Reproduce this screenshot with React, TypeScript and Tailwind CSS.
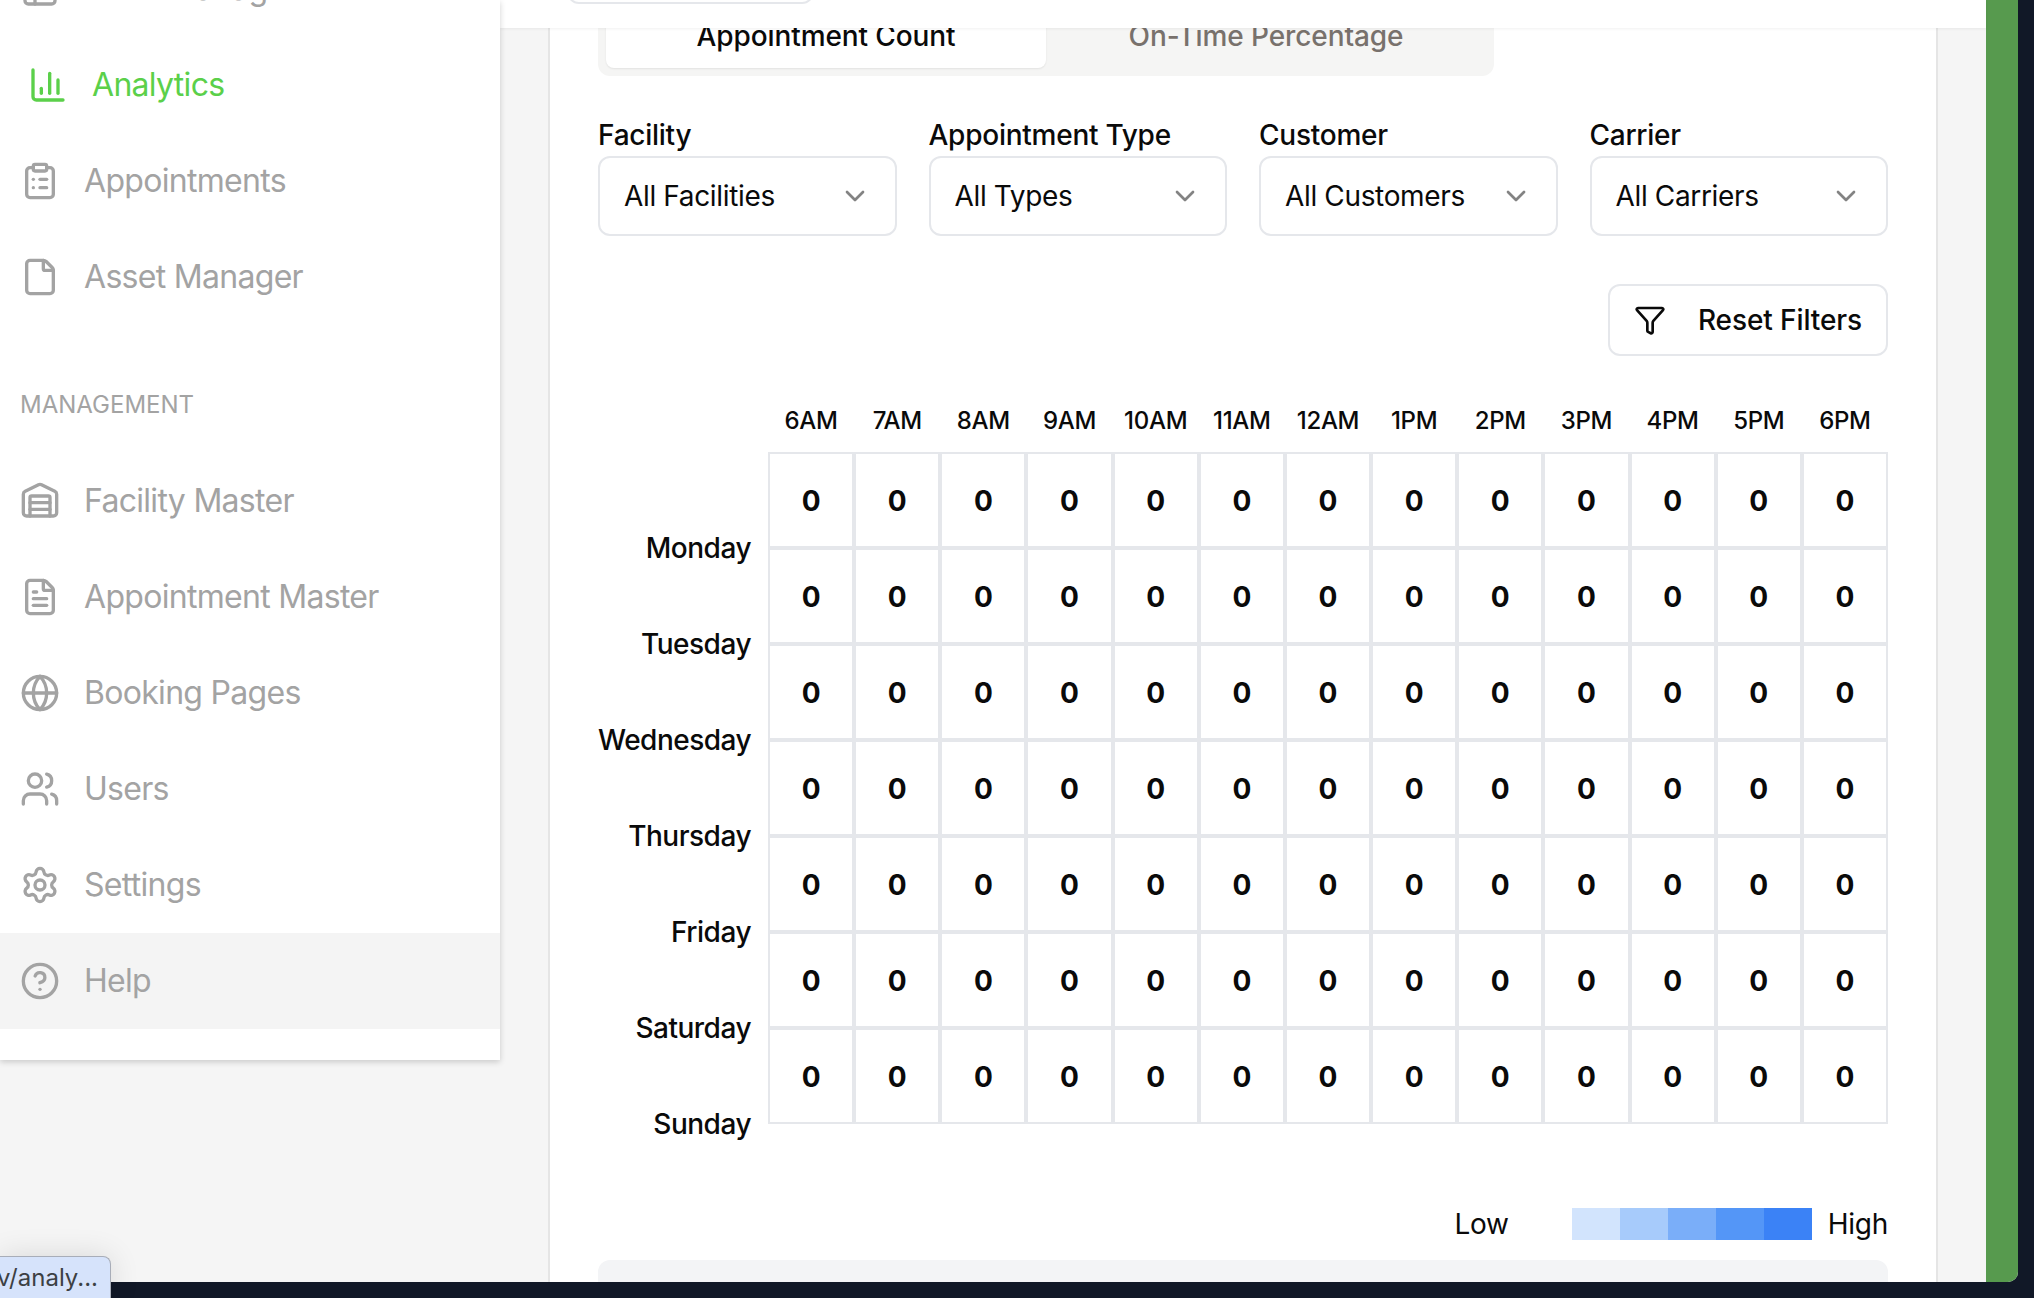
import { ChartColumn, ChevronDown, CircleHelp, ClipboardList, File, FileText, Funnel, Globe, PanelLeft, Settings, Users, Warehouse } from "lucide-react";
import type { ComponentType } from "react";

type Icon = ComponentType<{ size?: number; strokeWidth?: number; className?: string }>;

function NavItem({ icon: I, label, active, hover }: { icon: Icon; label: string; active?: boolean; hover?: boolean }) {
  return (
    <div className={`flex h-[96px] items-center gap-[24px] ${active ? "pl-[28px] text-[#5bd04a]" : "pl-[20px] text-[#a3a3a3]"} ${hover ? "bg-[#f4f4f4]" : ""}`}>
      <I size={40} strokeWidth={2} className="shrink-0" />
      <span className="text-[32px] leading-[48px] tracking-[-0.7px]">{label}</span>
    </div>
  );
}

function Select({ label, value }: { label: string; value: string }) {
  return (
    <div>
      <div className="h-[40px] text-[28px] leading-[38px] font-[450] tracking-[-0.25px] text-[#0a0a0a]">{label}</div>
      <div className="flex h-[80px] items-center justify-between rounded-[12px] border-2 border-[#e5e7eb] pl-[24px] pr-[24px] text-[28px] tracking-[-0.35px] text-[#0a0a0a]">
        <span>{value}</span>
        <ChevronDown size={32} className="text-[#0a0a0a] opacity-50" />
      </div>
    </div>
  );
}

const hours = ["6AM", "7AM", "8AM", "9AM", "10AM", "11AM", "12AM", "1PM", "2PM", "3PM", "4PM", "5PM", "6PM"];
const days = ["Monday", "Tuesday", "Wednesday", "Thursday", "Friday", "Saturday", "Sunday"];
const swatches = ["bg-[#d2e4fd]", "bg-[#a7cbfb]", "bg-[#7aaef9]", "bg-[#5496f7]", "bg-[#3b82f6]"];

export default function App() {
  return (
    <div className="relative h-[1298px] w-[2034px] overflow-hidden bg-[#111827] font-['Inter',sans-serif]">
      <div className="flex h-[1282px] w-[2018px] overflow-hidden rounded-br-[10px] bg-[#f5f5f5]">
        {/* Sidebar */}
        <aside className="relative z-20 h-[1060px] w-[500px] shrink-0 bg-white shadow-[0_2px_6px_rgba(0,0,0,0.18)]">
          <div className="-mt-[59px]">
            <NavItem icon={PanelLeft} label="Dock Manager" />
            <NavItem icon={ChartColumn} label="Analytics" active />
            <NavItem icon={ClipboardList} label="Appointments" />
            <NavItem icon={File} label="Asset Manager" />
          </div>
          <div className="mt-[64px] mb-[32px] pl-[20px] text-[24px] leading-[32px] text-[#a3a3a3]">MANAGEMENT</div>
          <NavItem icon={Warehouse} label="Facility Master" />
          <NavItem icon={FileText} label="Appointment Master" />
          <NavItem icon={Globe} label="Booking Pages" />
          <NavItem icon={Users} label="Users" />
          <NavItem icon={Settings} label="Settings" />
          <NavItem icon={CircleHelp} label="Help" hover />
        </aside>

        {/* Main */}
        <main className="flex min-w-0 flex-1 flex-col">
          <header className="relative z-10 h-[28px] shrink-0 bg-white pl-[67px] shadow-[0_1px_3px_rgba(0,0,0,0.06)]">
            <div className="-mt-[40px] h-[44px] w-[247px] rounded-[12px] border-2 border-[#e5e7eb]" />
          </header>
          <div className="min-h-0 flex-1 px-[48px]">
            <div className="h-full overflow-hidden border-x-2 border-[#e5e5e5] bg-white px-[48px]">
              <div className="-mt-[32px] flex h-[80px] w-[896px] rounded-[12px] bg-[#f5f5f4] p-[8px] text-[28px] font-[450] tracking-[-0.1px]">
                <div className="flex flex-1 items-center justify-center rounded-[8px] bg-white text-[#0a0a0a] shadow-[0_1px_2px_rgba(0,0,0,0.08)]">Appointment Count</div>
                <div className="flex flex-1 items-center justify-center text-[#78716c]">On-Time Percentage</div>
              </div>

              <div className="mt-[40px] grid grid-cols-4 gap-[32px]">
                <Select label="Facility" value="All Facilities" />
                <Select label="Appointment Type" value="All Types" />
                <Select label="Customer" value="All Customers" />
                <Select label="Carrier" value="All Carriers" />
              </div>

              <div className="mt-[48px] flex justify-end">
                <div className="flex h-[72px] items-center gap-[32px] rounded-[12px] border-2 border-[#e5e7eb] px-[24px] text-[28px] font-[450] tracking-[-0.1px] text-[#0a0a0a]">
                  <Funnel size={32} />
                  <span>Reset Filters</span>
                </div>
              </div>

              <div className="mt-[48px] flex gap-[17px]">
                <div className="flex w-[153px] shrink-0 flex-col gap-[56px] pt-[124px] text-right text-[28px] leading-[40px] font-[450] tracking-[-0.5px] whitespace-nowrap text-[#0a0a0a]">
                  {days.map((d) => (
                    <div key={d}>{d}</div>
                  ))}
                </div>
                <div className="min-w-0 flex-1">
                  <div className="mb-[15px] grid grid-cols-[repeat(13,1fr)] pt-[1px] text-center text-[24px] leading-[32px] font-[450] tracking-[-0.3px] text-[#0a0a0a]">
                    {hours.map((h) => (
                      <div key={h}>{h}</div>
                    ))}
                  </div>
                  <div className="grid grid-cols-[repeat(13,1fr)]">
                    {Array.from({ length: 91 }).map((_, i) => (
                      <div key={i} className="flex h-[96px] items-center justify-center border-2 border-[#e5e7eb] pt-[2px] text-[28px] font-bold text-[#0a0a0a]">0</div>
                    ))}
                  </div>
                </div>
              </div>

              <div className="mt-[60px] flex h-[40px] items-center justify-end text-[28px] tracking-[-0.25px] text-[#0a0a0a]">
                <span className="mr-[63px]">Low</span>
                <div className="flex">
                  {swatches.map((s) => (
                    <div key={s} className={`h-[32px] w-[48px] ${s}`} />
                  ))}
                </div>
                <span className="ml-[16px]">High</span>
              </div>

              <div className="mt-[16px] h-[100px] rounded-[12px] bg-[#f3f4f6]" />
            </div>
          </div>
        </main>

        <div className="h-full w-[32px] shrink-0 bg-[#579a4e]" />
      </div>

      {/* Browser status bubble */}
      <div className="absolute bottom-0 left-0 z-30 flex h-[42px] w-[111px] items-center justify-end overflow-hidden rounded-tr-[8px] border-t border-r border-[#a8adb8] bg-[#d6e3fb] pr-[12px] text-[24px] whitespace-nowrap text-[#3c4043] shadow-[0_0_30px_rgba(0,0,0,0.12)]">
        v/analy...
      </div>
    </div>
  );
}
